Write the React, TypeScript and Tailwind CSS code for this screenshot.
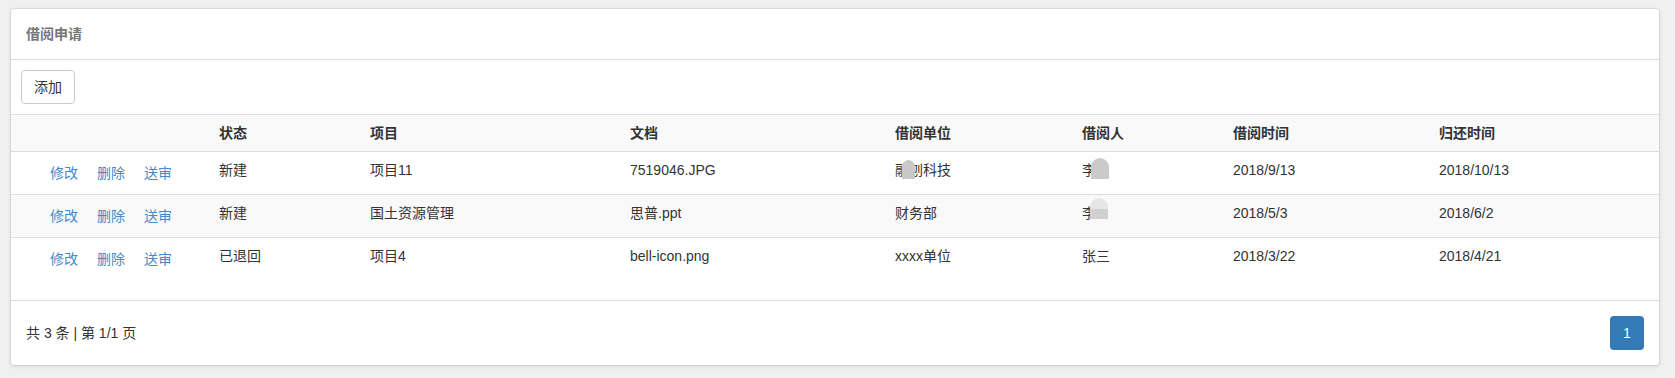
const rows = [
  { status: "新建", project: "项目11", doc: "7519046.JPG", unit: "融", unitRest: "科技", person: "李", date: "2018/9/13", back: "2018/10/13", blob: 1 },
  { status: "新建", project: "国土资源管理", doc: "思普.ppt", unit: "财务部", unitRest: "", person: "李", date: "2018/5/3", back: "2018/6/2", blob: 2 },
  { status: "已退回", project: "项目4", doc: "bell-icon.png", unit: "xxxx单位", unitRest: "", person: "张三", date: "2018/3/22", back: "2018/4/21", blob: 0 },
];

const cols = "grid grid-cols-[200px_151px_260px_265px_187px_151px_206px_1fr]";

export default function App() {
  return (
    <div
      className="min-h-[378px] bg-[#f0f0f0] pt-[9px] pb-[13px] pl-[11px] pr-[16px] text-[14px] leading-[20px] text-[#333]"
      style={{ fontFamily: '"Liberation Sans", "Noto Sans CJK SC", sans-serif' }}
    >
      <div className="bg-white rounded-[3px] shadow-[0_0_0_1px_rgba(0,0,0,0.06),0_1px_4px_rgba(0,0,0,0.12)]">
        <div className="h-[51px] px-[15px] flex items-center border-b border-[#ddd]">
          <span className="font-bold text-[#777]">借阅申请</span>
        </div>

        <div className="px-[10px] pt-[10px] pb-[10px]">
          <button className="h-[34px] px-[12px] border border-[#ccc] rounded-[4px] bg-white text-[#333]">添加</button>
        </div>

        <div className="border-t border-[#ddd]">
          <div className={`${cols} bg-[#f9f9f9] border-b border-[#ddd] font-bold`}>
            <div className="p-[8px]"></div>
            <div className="p-[8px]">状态</div>
            <div className="p-[8px]">项目</div>
            <div className="p-[8px]">文档</div>
            <div className="p-[8px]">借阅单位</div>
            <div className="p-[8px]">借阅人</div>
            <div className="p-[8px]">借阅时间</div>
            <div className="p-[8px]">归还时间</div>
          </div>

          {rows.map((r, i) => (
            <div
              key={i}
              className={`${cols} ${i === 1 ? "bg-[#f9f9f9]" : "bg-white"} ${i < 2 ? "border-b border-[#ddd]" : ""}`}
            >
              <div className="py-[8px] pr-[8px] pl-[39px] flex items-start gap-[19px] text-[#428bca]">
                <span className="pt-[3px]">修改</span>
                <span className="pt-[3px]">删除</span>
                <span className="pt-[3px]">送审</span>
              </div>
              <div className="p-[8px] h-[42px]">{r.status}</div>
              <div className="p-[8px]">{r.project}</div>
              <div className="p-[8px]">{r.doc}</div>
              <div className="p-[8px] relative">
                {r.unit}
                {r.unitRest && <span>刨{r.unitRest}</span>}
                {r.blob === 1 && (
                  <span className="absolute left-[15px] top-[8px] w-[13px] h-[19px] rounded-t-full bg-[#c8c8c8]"></span>
                )}
              </div>
              <div className="p-[8px] relative">
                {r.person}
                {r.blob === 1 && (
                  <span className="absolute left-[17px] top-[6px] w-[18px] h-[21px] rounded-t-full bg-[#cacaca]"></span>
                )}
                {r.blob === 2 && (
                  <span className="absolute left-[16px] top-[3px] w-[18px] h-[21px] flex flex-col">
                    <span className="h-[11px] rounded-t-full bg-[#e6e6e6]"></span>
                    <span className="h-[10px] bg-[#d0d0d0]"></span>
                  </span>
                )}
              </div>
              <div className="p-[8px]">{r.date}</div>
              <div className="p-[8px]">{r.back}</div>
            </div>
          ))}
          <div className="h-[20px]"></div>
        </div>

        <div className="border-t border-[#ddd] h-[65px] px-[15px] flex items-center justify-between">
          <span>共 3 条 | 第 1/1 页</span>
          <span className="w-[34px] h-[34px] rounded-[4px] bg-[#337ab7] text-white flex items-center justify-center">1</span>
        </div>
      </div>
    </div>
  );
}
